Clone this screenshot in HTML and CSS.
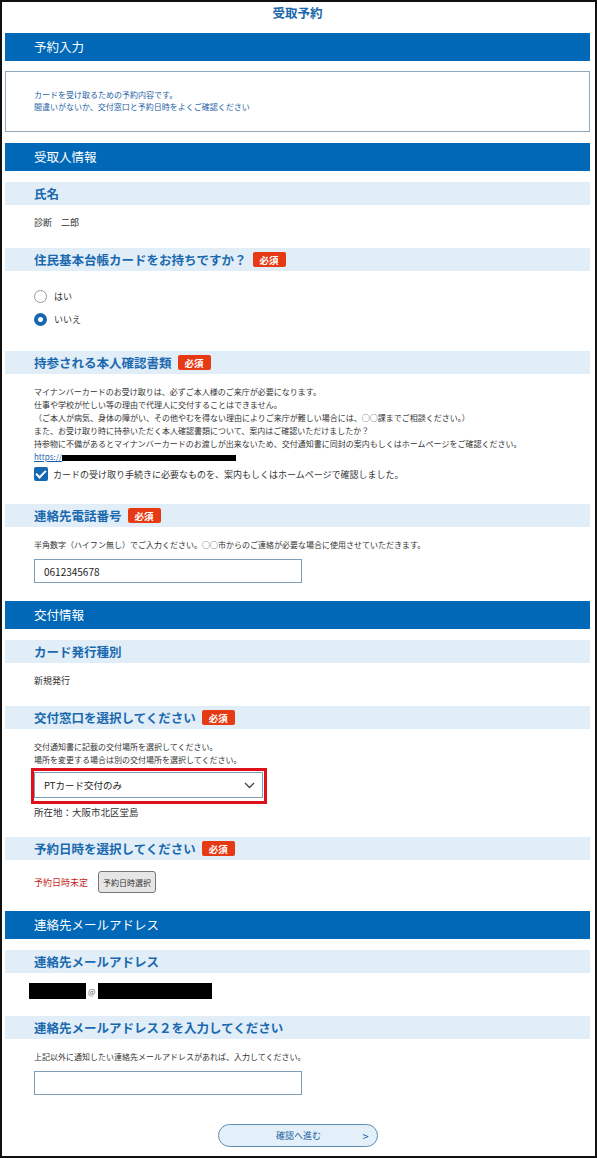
FILE: index.html
```html
<!DOCTYPE html>
<html lang="ja">
<head>
    <meta charset="UTF-8">
    <meta name="viewport" content="width=device-width, initial-scale=1.0">
    <title>受取予約</title>
    <link rel="stylesheet" href="styles.css">
</head>
<body>
    <div class="page">
        <h1 class="page-title">受取予約</h1>

        <!-- 予約入力 -->
        <h2 class="bar">予約入力</h2>
        <div class="notice">
            <p>カードを受け取るための予約内容です。</p>
            <p>間違いがないか、交付窓口と予約日時をよくご確認ください</p>
        </div>

        <!-- 受取人情報 -->
        <h2 class="bar">受取人情報</h2>

        <div class="field">
            <h3 class="field-head">氏名</h3>
            <div class="field-body">
                <p class="value">診断　二郎</p>
            </div>
        </div>

        <div class="field">
            <h3 class="field-head">住民基本台帳カードをお持ちですか？<span class="badge">必須</span></h3>
            <div class="field-body radios">
                <label class="radio"><input type="radio" name="juki" value="yes"><span>はい</span></label>
                <label class="radio"><input type="radio" name="juki" value="no" checked><span>いいえ</span></label>
            </div>
        </div>

        <div class="field">
            <h3 class="field-head">持参される本人確認書類<span class="badge">必須</span></h3>
            <div class="field-body docs">
                <p class="note">マイナンバーカードのお受け取りは、必ずご本人様のご来庁が必要になります。</p>
                <p class="note">仕事や学校が忙しい等の理由で代理人に交付することはできません。</p>
                <p class="note">（ご本人が病気、身体の障がい、その他やむを得ない理由によりご来庁が難しい場合には、○○課までご相談ください。）</p>
                <p class="note">また、お受け取り時に持参いただく本人確認書類について、案内はご確認いただけましたか？</p>
                <p class="note">持参物に不備があるとマイナンバーカードのお渡しが出来ないため、交付通知書に同封の案内もしくはホームページをご確認ください。</p>
                <p class="note"><a class="link" href="#">https://<span class="masked masked-link"></span></a></p>
                <label class="check">
                    <input type="checkbox" checked>
                    <span>カードの受け取り手続きに必要なものを、案内もしくはホームページで確認しました。</span>
                </label>
            </div>
        </div>

        <div class="field">
            <h3 class="field-head">連絡先電話番号<span class="badge">必須</span></h3>
            <div class="field-body">
                <p class="note">半角数字（ハイフン無し）でご入力ください。○○市からのご連絡が必要な場合に使用させていただきます。</p>
                <input class="text-input" type="text" value="0612345678">
            </div>
        </div>

        <!-- 交付情報 -->
        <h2 class="bar">交付情報</h2>

        <div class="field">
            <h3 class="field-head">カード発行種別</h3>
            <div class="field-body">
                <p class="value">新規発行</p>
            </div>
        </div>

        <div class="field">
            <h3 class="field-head">交付窓口を選択してください<span class="badge">必須</span></h3>
            <div class="field-body">
                <p class="note">交付通知書に記載の交付場所を選択してください。</p>
                <p class="note">場所を変更する場合は別の交付場所を選択してください。</p>
                <div class="select-mark">
                    <div class="select-box">
                        <select>
                            <option>PTカード交付のみ</option>
                        </select>
                        <svg class="chevron" width="11" height="7" viewBox="0 0 11 7">
                            <path d="M1 1 L5.5 5.5 L10 1" fill="none" stroke="#444" stroke-width="1.3"/>
                        </svg>
                    </div>
                </div>
                <p class="location">所在地：大阪市北区堂島</p>
            </div>
        </div>

        <div class="field">
            <h3 class="field-head">予約日時を選択してください<span class="badge">必須</span></h3>
            <div class="field-body">
                <div class="date-row">
                    <span class="date-status">予約日時未定</span>
                    <button class="date-btn" type="button">予約日時選択</button>
                </div>
            </div>
        </div>

        <!-- 連絡先メールアドレス -->
        <h2 class="bar">連絡先メールアドレス</h2>

        <div class="field">
            <h3 class="field-head">連絡先メールアドレス</h3>
            <div class="field-body mail">
                <div class="mail-row">
                    <span class="masked masked-user"></span>
                    <span class="at">@</span>
                    <span class="masked masked-domain"></span>
                </div>
            </div>
        </div>

        <div class="field">
            <h3 class="field-head">連絡先メールアドレス２を入力してください</h3>
            <div class="field-body last">
                <p class="note">上記以外に通知したい連絡先メールアドレスがあれば、入力してください。</p>
                <input class="text-input" type="email">
            </div>
        </div>

        <div class="actions">
            <button class="next-btn" type="button">
                <span class="next-label">確認へ進む</span>
                <span class="next-arrow">&gt;</span>
            </button>
        </div>
    </div>
</body>
</html>
```

FILE: styles.css
```css
* {
    margin: 0;
    padding: 0;
    box-sizing: border-box;
}

body {
    font-family: "Noto Sans CJK JP", "Noto Sans", sans-serif;
    color: #333333;
    background: #ffffff;
}

.page {
    width: 597px;
    min-height: 1158px;
    border: 2px solid #111111;
    padding: 0 5px 0 3px;
}

.page-title {
    font-size: 12.5px;
    font-weight: bold;
    color: #1a67ad;
    text-align: center;
    line-height: 22px;
    margin-bottom: 9px;
}

/* section bars */
.bar {
    height: 28px;
    line-height: 28px;
    padding-left: 29px;
    background: #0068b6;
    color: #ffffff;
    font-size: 12.5px;
    font-weight: normal;
}

.notice {
    margin: 10px 0 11px;
    border: 1px solid #8ea8bf;
    padding: 17px 28px 18px;
    font-size: 8px;
    line-height: 12px;
    color: #1e62a6;
}

.bar + .field {
    margin-top: 11px;
}

/* field header + body */
.field-head {
    display: flex;
    align-items: center;
    gap: 6px;
    height: 23px;
    padding-left: 29px;
    background: #e1eef8;
    color: #1a69af;
    font-size: 12.5px;
    font-weight: bold;
}

.badge {
    display: inline-flex;
    align-items: center;
    justify-content: center;
    width: 33px;
    height: 15px;
    border-radius: 2px;
    background: #e63a14;
    color: #ffffff;
    font-size: 9.5px;
    font-weight: bold;
}

.field-body {
    padding: 11px 0 18px 29px;
}

.value {
    font-size: 9px;
    line-height: 14px;
}

.note {
    font-size: 8px;
    line-height: 13px;
}

/* radios */
.field-body.radios {
    padding-top: 14px;
    padding-bottom: 20px;
}

.radio {
    display: flex;
    align-items: center;
    gap: 7px;
    height: 23px;
    font-size: 9px;
}

.radio input {
    appearance: none;
    width: 13px;
    height: 13px;
    border: 1px solid #9a9a9a;
    border-radius: 50%;
    background: #ffffff;
}

.radio input:checked {
    border: 4px solid #1467b0;
}

/* document check */
.field-body.docs {
    padding-bottom: 22px;
}

.link {
    color: #1f5fb0;
    text-decoration: underline;
}

.masked {
    display: inline-block;
    background: #000000;
}

.masked-link {
    width: 174px;
    height: 6px;
    vertical-align: middle;
}

.check {
    display: flex;
    align-items: center;
    gap: 5px;
    height: 16px;
    margin-top: 3px;
    font-size: 9px;
}

.check input {
    appearance: none;
    width: 14px;
    height: 14px;
    border-radius: 2px;
    background: #1467b0;
    position: relative;
}

.check input:checked::after {
    content: "";
    position: absolute;
    left: 4px;
    top: 1px;
    width: 4px;
    height: 8px;
    border: solid #ffffff;
    border-width: 0 2px 2px 0;
    transform: rotate(45deg);
}

/* inputs */
.text-input {
    display: block;
    width: 268px;
    height: 24px;
    margin-top: 8px;
    padding: 0 9px;
    border: 1px solid #7f9db6;
    font-family: inherit;
    font-size: 10px;
    color: #222222;
}

.select-mark {
    display: inline-block;
    margin: 2px 0 0 -3px;
    border: 3px solid #e0101a;
    padding: 1px 1px 3px 0;
}

.select-box {
    position: relative;
}

.select-box select {
    appearance: none;
    display: block;
    width: 229px;
    height: 26px;
    padding-left: 9px;
    border: 1px solid #7f9db6;
    border-radius: 0;
    background: #ffffff;
    font-family: inherit;
    font-size: 9.5px;
    color: #222222;
}

.chevron {
    position: absolute;
    right: 8px;
    top: 10px;
}

.location {
    margin-top: 1px;
    font-size: 9.5px;
    line-height: 14px;
}

/* date */
.date-row {
    display: flex;
    align-items: center;
    gap: 10px;
    height: 22px;
}

.date-status {
    color: #c41f1b;
    font-size: 9px;
}

.date-btn {
    width: 58px;
    height: 22px;
    border: 1px solid #777777;
    border-radius: 3px;
    background: #e6e6e6;
    font-family: inherit;
    font-size: 8px;
    color: #333333;
}

/* mail */
.field-body.mail {
    padding-top: 10px;
    padding-bottom: 17px;
}

.mail-row {
    display: flex;
    align-items: center;
    gap: 2px;
    height: 16px;
    margin-left: -5px;
}

.masked-user {
    width: 57px;
    height: 16px;
}

.masked-domain {
    width: 114px;
    height: 16px;
}

.at {
    font-size: 8px;
    color: #555555;
}

.field-body.last {
    padding-bottom: 0;
}

/* footer button */
.actions {
    display: flex;
    justify-content: center;
    padding-top: 29px;
}

.next-btn {
    display: grid;
    grid-template-columns: 1fr auto 1fr;
    align-items: center;
    width: 160px;
    height: 23px;
    padding: 0 8px 0 10px;
    border: 1px solid #5b8db5;
    border-radius: 12px;
    background: #e3f0fa;
    color: #1d5f9c;
    font-family: inherit;
    font-size: 9px;
}

.next-label {
    grid-column: 2;
}

.next-arrow {
    grid-column: 3;
    justify-self: end;
    font-size: 11px;
}
```
